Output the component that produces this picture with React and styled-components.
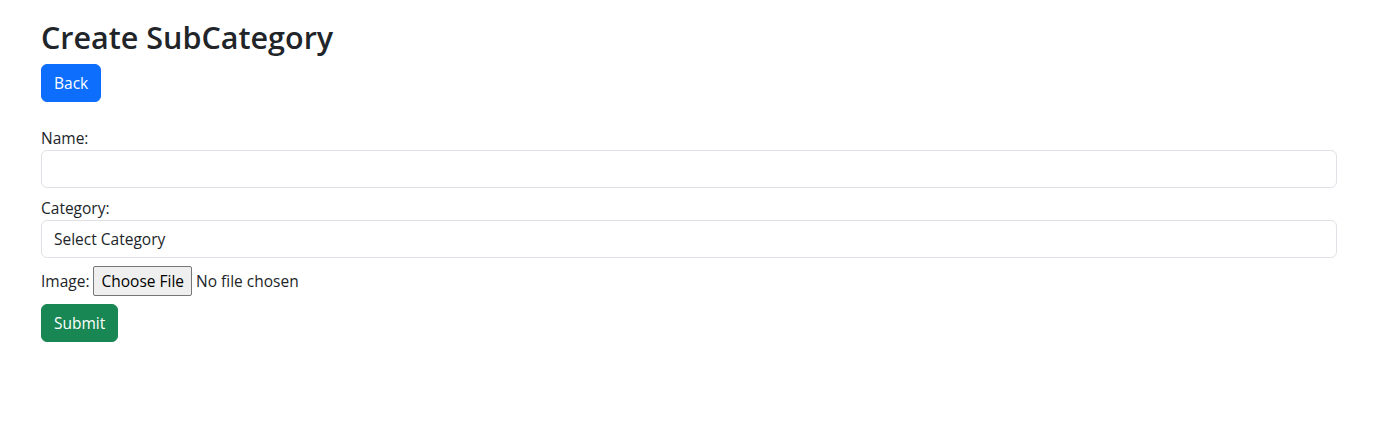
import styled, { createGlobalStyle } from 'styled-components';

const GlobalStyle = createGlobalStyle`
    * { box-sizing: border-box; }
    body {
        margin: 0;
        font-family: "Open Sans", "Noto Sans", "Liberation Sans", sans-serif;
        font-size: 15.5px;
        line-height: 24px;
        color: #212529;
        background: #fff;
    }
`;

const Container = styled.div`
    width: 1296px;
    margin-left: 41px;
    padding-top: 18px;
`;
const Title = styled.h1`
    margin: 0 0 8px;
    font-size: 30.5px;
    font-weight: 600;
    line-height: 38px;
`;
const Button = styled.button`
    display: inline-block;
    height: 38px;
    padding: 6px 12px;
    font: inherit;
    line-height: 24px;
    color: #fff;
    background: ${(p) => p.$color};
    border: 1px solid ${(p) => p.$color};
    border-radius: 6px;
    cursor: pointer;
`;
const Form = styled.form`
    margin-top: 24px;
`;
const Field = styled.div`
    margin-bottom: 8px;
`;
const Label = styled.label`
    display: inline-block;
`;
const Input = styled.input`
    display: block;
    width: 100%;
    height: 38px;
    padding: 6px 12px;
    font: inherit;
    color: #212529;
    border: 1px solid #dee2e6;
    border-radius: 6px;
`;
const Select = styled.select`
    display: block;
    width: 100%;
    height: 38px;
    padding: 6px 12px;
    font: inherit;
    color: #212529;
    background: #fff;
    border: 1px solid #dee2e6;
    border-radius: 6px;
    appearance: none;
`;
const FileRow = styled.div`
    display: flex;
    align-items: center;
    height: 30px;
    margin-bottom: 8px;
`;
const FileInput = styled.input`
    font: inherit;
    margin-left: 4px;

    &::file-selector-button {
        font: inherit;
        height: 30px;
        padding: 0 7px;
        margin-right: 4px;
        color: #000;
        background: #efefef;
        border: 1px solid #767676;
        border-radius: 2px;
    }
`;

const App = () => {
    return (
        <>
            <GlobalStyle />
            <Container>
                <Title>Create SubCategory</Title>
                <Button type="button" $color="#0d6efd">Back</Button>
                <Form onSubmit={(e) => e.preventDefault()}>
                    <Field>
                        <Label>Name:</Label>
                        <Input type="text" />
                    </Field>
                    <Field>
                        <Label>Category:</Label>
                        <Select defaultValue="">
                            <option value="">Select Category</option>
                        </Select>
                    </Field>
                    <FileRow>
                        <Label>Image:</Label>
                        <FileInput type="file" />
                    </FileRow>
                    <Button type="submit" $color="#198754">Submit</Button>
                </Form>
            </Container>
        </>
    );
}

export default App
